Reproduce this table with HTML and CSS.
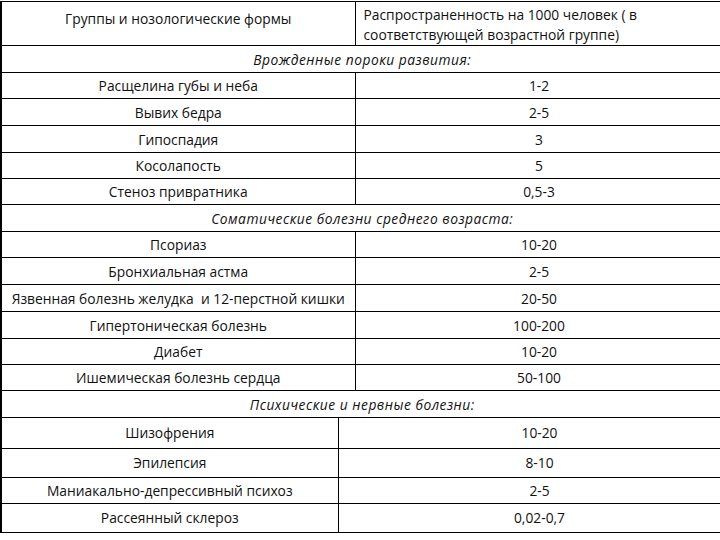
FILE: index.html
```html
<!DOCTYPE html>
<html lang="ru">
<head>
<meta charset="utf-8">
<link rel="stylesheet" href="styles.css">
</head>
<body>
<div class="page">
  <table class="tbl top">
    <colgroup><col class="c1"><col class="c2"></colgroup>
    <tr class="head">
      <td class="h1">Группы и нозологические формы</td>
      <td class="h2">Распространенность на 1000 человек ( в<br>соответствующей возрастной группе)</td>
    </tr>
    <tr class="r27"><td colspan="2" class="cat">Врожденные пороки развития:</td></tr>
    <tr class="r26"><td>Расщелина губы и неба</td><td>1-2</td></tr>
    <tr class="r27"><td>Вывих бедра</td><td>2-5</td></tr>
    <tr class="r27"><td>Гипоспадия</td><td>3</td></tr>
    <tr class="r26"><td>Косолапость</td><td>5</td></tr>
    <tr class="r26"><td>Стеноз привратника</td><td>0,5-3</td></tr>
    <tr class="r27"><td colspan="2" class="cat">Соматические болезни среднего возраста:</td></tr>
    <tr class="r26"><td>Псориаз</td><td>10-20</td></tr>
    <tr class="r27"><td>Бронхиальная астма</td><td>2-5</td></tr>
    <tr class="r27"><td>Язвенная болезнь желудка&nbsp; и 12-перстной кишки</td><td>20-50</td></tr>
    <tr class="r27"><td>Гипертоническая болезнь</td><td>100-200</td></tr>
    <tr class="r26"><td>Диабет</td><td>10-20</td></tr>
    <tr class="r26"><td>Ишемическая болезнь сердца</td><td>50-100</td></tr>
    <tr class="r27"><td colspan="2" class="cat">Психические и нервные болезни:</td></tr>
  </table>
  <table class="tbl bottom">
    <colgroup><col class="b1"><col class="b2"></colgroup>
    <tr class="b31"><td>Шизофрения</td><td>10-20</td></tr>
    <tr class="b30"><td>Эпилепсия</td><td>8-10</td></tr>
    <tr class="b27"><td>Маниакально-депрессивный психоз</td><td>2-5</td></tr>
    <tr class="b30"><td>Рассеянный склероз</td><td>0,02-0,7</td></tr>
  </table>
</div>
</body>
</html>
```
FILE: styles.css
```css
html, body {
  margin: 0;
  padding: 0;
  background: #ffffff;
}
.page {
  width: 720px;
  height: 540px;
  overflow: hidden;
  padding-top: 1px;
  box-sizing: border-box;
  font-family: "Open Sans", "Noto Sans", sans-serif;
  font-size: 13.8px;
  color: #111;
}
.tbl {
  border-collapse: collapse;
  table-layout: fixed;
}
.tbl td {
  border: 1px solid #000;
  text-align: center;
  vertical-align: middle;
  padding: 0;
  line-height: 17px;
  white-space: nowrap;
}
.tbl tr td:first-child {
  border-left: 2px solid #000;
}
.top { width: 722px; }
.top .c1 { width: 354px; }
.top .c2 { width: 368px; }
.bottom { width: 740px; }
.bottom .b1 { width: 337px; }
.bottom .b2 { width: 403px; }
.bottom tr:first-child td { border-top: none; }
.head { height: 44px; }
.head td { vertical-align: top; }
.h1 { padding-top: 8px !important; }
.h2 {
  text-align: left !important;
  padding: 3px 0 0 8px !important;
  line-height: 20px !important;
}
.cat {
  font-style: italic;
  letter-spacing: 0.5px;
}
.r26 { height: 26px; }
.r27 { height: 27px; }
.b31 { height: 30px; }
.b30 { height: 29px; }
.b27 { height: 26px; }
```
